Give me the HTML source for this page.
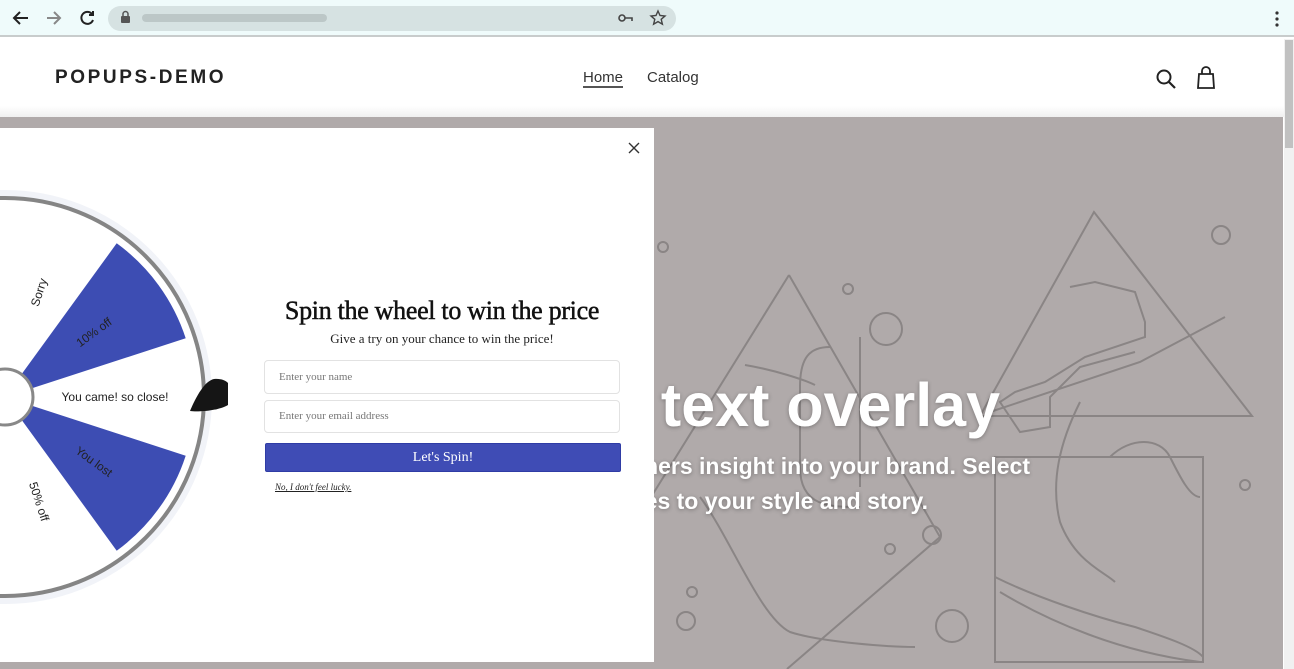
<!DOCTYPE html>
<html><head><meta charset="utf-8"><style>
*{margin:0;padding:0;box-sizing:border-box}
body{width:1294px;height:669px;overflow:hidden;position:relative;background:#fff;font-family:"Liberation Sans",sans-serif}
.abs{position:absolute}
.r{position:absolute;white-space:nowrap;font-weight:bold;color:#fff;text-shadow:0 1px 4px rgba(0,0,0,.3)}
</style></head><body>
<div class="abs" style="left:0;top:0;width:1294px;height:37px;background:#effbfb;border-bottom:2px solid #c8cccc"></div>
<svg class="abs" style="left:0;top:0" width="1294" height="37">
<g stroke="#222" stroke-width="2" fill="none">
<path d="M28 18H14M20 12l-6 6 6 6"/>
<path d="M47 18h13M54 12l6 6-6 6" stroke="#888"/>
<path d="M92 14a6 6 0 1 0 1 6"/><path d="M93 11v4h-4" />
</g>
<rect x="108" y="6" width="568" height="25" rx="12.5" fill="#d6e2e2"/>
<rect x="121" y="16" width="9" height="7" rx="1" fill="#555"/><path d="M123 16v-2a2.5 2.5 0 0 1 5 0v2" stroke="#555" stroke-width="1.5" fill="none"/>
<rect x="142" y="14" width="185" height="8" rx="4" fill="#b5c0c0" opacity=".8"/>
<circle cx="622" cy="18" r="3" stroke="#444" stroke-width="1.6" fill="none"/><path d="M625 18h7v3" stroke="#444" stroke-width="1.6" fill="none"/>
<path d="M658 11l2 4.5 5 .5-3.8 3.3 1.2 4.9-4.4-2.6-4.4 2.6 1.2-4.9-3.8-3.3 5-.5z" stroke="#444" stroke-width="1.4" fill="none"/>
<circle cx="1277" cy="13" r="1.6" fill="#333"/><circle cx="1277" cy="19" r="1.6" fill="#333"/><circle cx="1277" cy="25" r="1.6" fill="#333"/>
</svg>
<div class="abs" style="left:55px;top:67px;font-size:19px;font-weight:bold;letter-spacing:2.6px;color:#222">POPUPS-DEMO</div>
<div class="abs" style="left:583px;top:69px;font-size:15px;color:#333;border-bottom:2px solid #555;line-height:17px">Home</div>
<div class="abs" style="left:647px;top:69px;font-size:15px;color:#333;line-height:17px">Catalog</div>
<svg class="abs" style="left:1150px;top:62px" width="80" height="34">
<circle cx="14" cy="15" r="6.5" stroke="#222" stroke-width="2" fill="none"/><path d="M19 20l6 6" stroke="#222" stroke-width="2.2"/>
<path d="M49 12h14l1 14H48z" stroke="#222" stroke-width="1.8" fill="none"/><path d="M52 12V9a4 4 0 0 1 8 0v3" stroke="#222" stroke-width="1.8" fill="none"/>
</svg>
<div class="abs" style="left:0;top:106px;width:1284px;height:11px;background:linear-gradient(#fff,#f0f0f0)"></div>
<div class="abs" style="left:1284px;top:39px;width:10px;height:630px;background:#f1f1f1"></div>
<div class="abs" style="left:1285px;top:40px;width:8px;height:108px;background:#c1c1c1"></div>
<div class="abs" style="left:0;top:117px;width:1283px;height:552px;background:#b0aaaa"></div>
<svg class="abs" style="left:0;top:117px" width="1283" height="552">
<g stroke="#8a8585" stroke-width="2" fill="none">
<path d="M789 158L940 420L787 552"/><path d="M789 158L620 430"/>
<path d="M745 248c30 5 60 15 70 20M860 220v150M830 230c-20 0-30 10-30 40v80c0 40 30 40 60 40"/>
<path d="M700 380c30 40 60 120 90 135c30 10 100 15 125 15"/>
<path d="M1094 95L980 299h272z"/>
<path d="M1070 170l25-5 40 10 10 30 0 15-60 20-40 25-30 10-15 10 20 30 30-5 0-30 30-30 55-15M990 295l150-50 85-45"/>
<rect x="995" y="340" width="208" height="205"/>
<path d="M1080 285c-20 40-30 80-20 120 15 40 45 50 55 60M1110 340c20-20 50-20 60 0 10 20 20 40 30 40M995 460c40 20 100 40 140 50 30 10 60 20 68 30M1000 475c50 30 120 60 200 70"/>
</g>
<g stroke="#8a8585" stroke-width="2" fill="none">
<circle cx="886" cy="212" r="16"/><circle cx="1221" cy="118" r="9"/><circle cx="663" cy="130" r="5"/><circle cx="848" cy="172" r="5"/><circle cx="932" cy="418" r="9"/><circle cx="686" cy="504" r="9"/><circle cx="952" cy="509" r="16"/><circle cx="1245" cy="368" r="5"/><circle cx="890" cy="432" r="5"/><circle cx="692" cy="475" r="5"/>
</g>
</svg>
<div class="r" style="right:294px;top:370px;font-size:61px">Image with text overlay</div>
<div class="r" style="right:264px;top:453px;font-size:23px">Give customers insight into your brand. Select</div>
<div class="r" style="right:366px;top:488px;font-size:23px">imagery and text that relates to your style and story.</div>
<div class="abs" style="left:0;top:128px;width:654px;height:534px;background:#fff;overflow:hidden">
<svg class="abs" style="left:0;top:0" width="654" height="534">
<g transform="translate(5 269)">
<circle r="203" fill="none" stroke="#f1f3f8" stroke-width="8"/>
<circle r="199" fill="#fff" stroke="#858585" stroke-width="4"/>
<path d="M0 0L180.7 -58.7A190 190 0 0 0 111.7 -153.7Z" fill="#3d4db3"/>
<path d="M0 0L180.7 58.7A190 190 0 0 1 111.7 153.7Z" fill="#3d4db3"/>
<circle r="28" fill="#fff" stroke="#888" stroke-width="3"/>
<g font-family="Liberation Sans,sans-serif" font-size="12" fill="#222" text-anchor="middle">
<text x="110" y="4">You came! so close!</text>
<text transform="rotate(-36) translate(110 4)">10% off</text>
<text transform="rotate(-72) translate(110 4)">Sorry</text>
<text transform="rotate(36) translate(110 4)">You lost</text>
<text transform="rotate(72) translate(110 4)">50% off</text>
</g>
</g>
<path d="M190 283c5-12 14-30 24-32 10-1 14 4 14 4v22c-10 6-30 7-38 6z" fill="#151515"/>
<path d="M629 15l10 10M639 15l-10 10" stroke="#333" stroke-width="1.4"/>
</svg>
<div class="abs" style="left:264px;top:168px;width:356px;text-align:center;font-family:'Liberation Serif',serif;font-size:26px;color:#111;letter-spacing:-.3px;-webkit-text-stroke:0.5px #111">Spin the wheel to win the price</div>
<div class="abs" style="left:264px;top:203px;width:356px;text-align:center;font-family:'Liberation Serif',serif;font-size:13px;color:#222">Give a try on your chance to win the price!</div>
<div class="abs" style="left:264px;top:232px;width:356px;height:34px;border:1px solid #e2e2e2;border-radius:4px;font-family:'Liberation Serif',serif;font-size:11px;color:#777;padding:10px 14px">Enter your name</div>
<div class="abs" style="left:264px;top:272px;width:356px;height:33px;border:1px solid #e2e2e2;border-radius:4px;font-family:'Liberation Serif',serif;font-size:11px;color:#777;padding:9px 14px">Enter your email address</div>
<div class="abs" style="left:265px;top:315px;width:356px;height:29px;background:#3f4cb5;border:1px solid #2f3ca5;border-radius:2px;font-family:'Liberation Serif',serif;font-size:14px;color:#fff;text-align:center;line-height:27px">Let's Spin!</div>
<div class="abs" style="left:275px;top:354px;font-family:'Liberation Serif',serif;font-size:9px;font-style:italic;color:#222;text-decoration:underline">No, I don't feel lucky.</div>
</div>
</body></html>
